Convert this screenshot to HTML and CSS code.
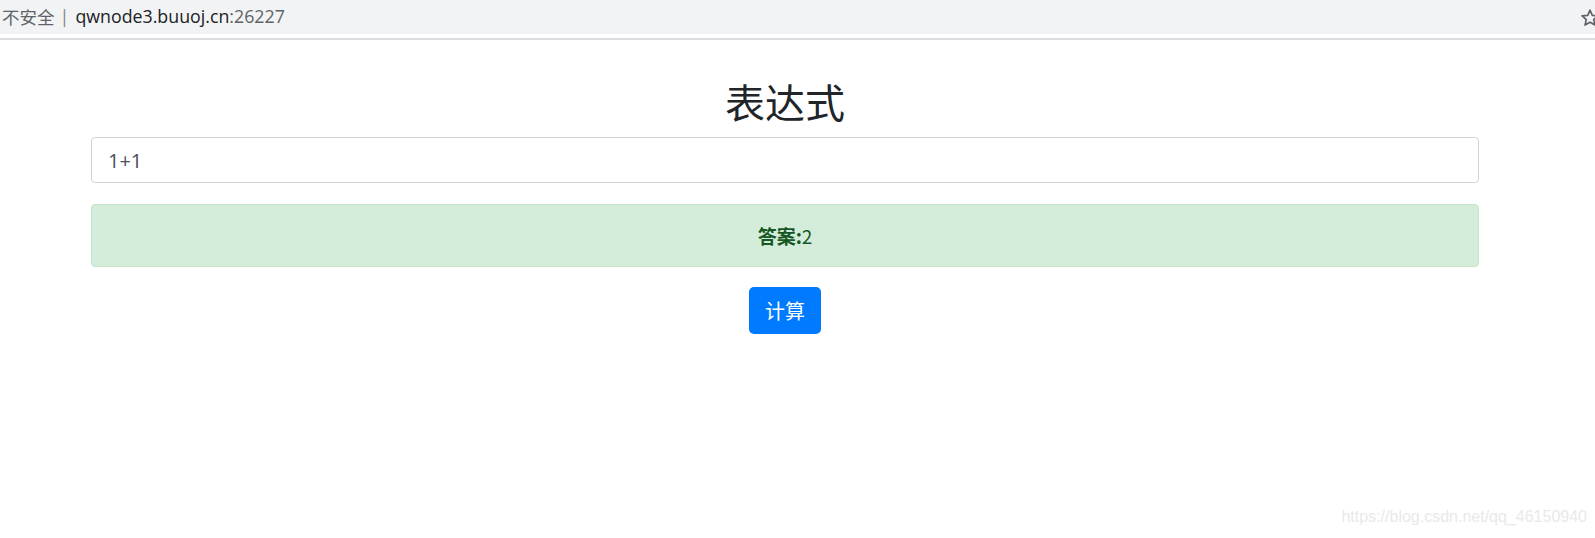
FILE: index.html
```html
<!DOCTYPE html>
<html lang="zh-CN">
<head>
<meta charset="utf-8">
<title>表达式</title>
<link rel="stylesheet" href="styles.css">
</head>
<body>
<div class="browser-bar">
  <div class="address">
    <span class="insecure">不安全</span><span class="sep">|</span><span class="host">qwnode3.buuoj.cn</span><span class="port">:26227</span>
  </div>
  <svg class="star" viewBox="0 0 20 20" width="20" height="20"><path d="M10 2.2l2.3 5.2 5.6.5-4.2 3.7 1.3 5.5L10 14.2l-5 2.9 1.3-5.5L2.1 7.9l5.6-.5z" fill="none" stroke="#5f6368" stroke-width="1.7" stroke-linejoin="round"/></svg>
</div>
<div class="bar-gap"></div>
<div class="bar-line"></div>
<main class="container">
  <h1 class="title">表达式</h1>
  <input class="expr" type="text" value="1+1">
  <div class="alert"><strong>答案:</strong>2</div>
  <div class="actions"><button class="btn">计算</button></div>
</main>
<div class="watermark">https://blog.csdn.net/qq_46150940</div>
</body>
</html>
```
FILE: styles.css
```css
html, body {
  margin: 0;
  padding: 0;
  background: #fff;
  font-family: "Noto Sans CJK SC", "Liberation Sans", sans-serif;
  overflow: hidden;
}
.browser-bar {
  height: 34px;
  background: #f1f3f4;
  display: flex;
  align-items: center;
  justify-content: space-between;
  overflow: hidden;
}
.address {
  display: flex;
  align-items: center;
  font-family: "Open Sans", "Noto Sans CJK SC", sans-serif;
  font-size: 17.8px;
  white-space: nowrap;
  margin-top: -2px;
}
.insecure {
  color: #5f6368;
  font-family: "Noto Sans CJK SC", sans-serif;
  font-size: 17.5px;
  padding-left: 2px;
}
.sep {
  color: #80868b;
  margin: 0 6px 0 5px;
  font-size: 18px;
}
.host { color: #202124; }
.port { color: #5f6368; }
.star {
  margin-right: -5px;
  margin-top: 2px;
  flex: none;
}
.bar-gap { height: 4px; }
.bar-line { height: 2px; background: #dadce0; }
.container {
  width: 1388px;
  margin-left: 91px;
  display: flex;
  flex-direction: column;
}
.title {
  margin: 33px 0 0;
  text-align: center;
  font-size: 40px;
  font-weight: 400;
  line-height: 56px;
  color: #212529;
}
.expr {
  box-sizing: border-box;
  height: 46px;
  margin-top: 8px;
  padding: 0 16px;
  border: 1px solid #ced4da;
  border-radius: 4px;
  font-family: "Open Sans", "Liberation Sans", sans-serif;
  font-size: 20px;
  color: #495057;
  outline: none;
}
.alert {
  box-sizing: border-box;
  height: 63px;
  margin-top: 21px;
  background: #d4edda;
  border: 1px solid #c3e6cb;
  border-radius: 4px;
  color: #155724;
  font-size: 19px;
  display: flex;
  align-items: center;
  justify-content: center;
}
.alert strong { font-weight: 700; }
.actions {
  display: flex;
  justify-content: center;
  margin-top: 20px;
}
.btn {
  height: 47px;
  padding: 0 16px;
  background: #007bff;
  color: #fff;
  border: none;
  border-radius: 5px;
  font-family: "Noto Sans CJK SC", sans-serif;
  font-size: 20px;
}
.watermark {
  position: absolute;
  right: 8px;
  top: 508px;
  font-family: "Liberation Sans", sans-serif;
  font-size: 16px;
  color: #e9e9e9;
}
```
